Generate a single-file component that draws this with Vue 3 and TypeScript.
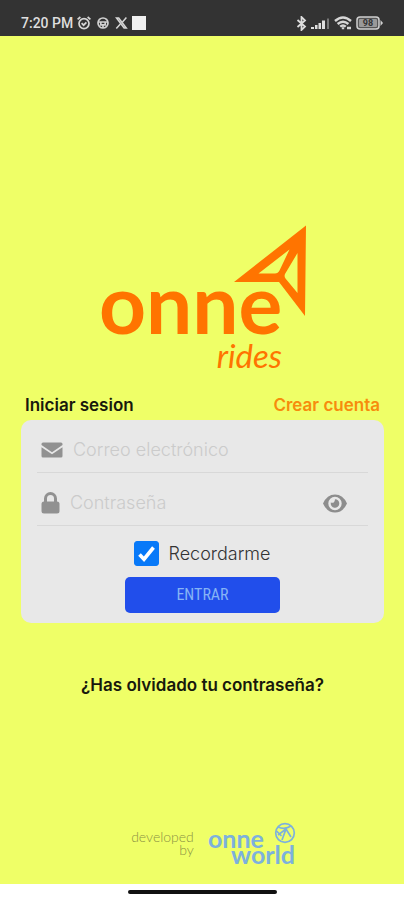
<script setup lang="ts">
import { ref } from 'vue'

const email = ref('')
const password = ref('')
const showPassword = ref(false)
const remember = ref(true)
</script>

<template>
  <div class="screen">
    <header class="status">
      <div class="status-group left">
        <span class="clock">7:20 PM</span>
        <svg width="14" height="14" viewBox="0 0 14 14" fill="none" stroke="#d6d6d6" stroke-width="1.7">
          <circle cx="7" cy="7.6" r="5" />
          <path d="M.6 3.4 3.4 1M13.4 3.4 10.6 1M4.6 7.2 6.6 9.2 9.4 6.4" />
        </svg>
        <svg class="helm" width="12" height="12" viewBox="0 0 12 12" fill="none" stroke="#d0d0d0" stroke-width="1.7">
          <circle cx="6" cy="6" r="5" />
          <path d="M1 5h10M3.800 5v2.800h4.400V5M6 7.800V11" />
        </svg>
        <svg class="ex" width="13" height="12" viewBox="0 0 13 12" fill="none" stroke="#d6d6d6">
          <path d="M1.5 1h2.2l7.6 10H9.1z" stroke-width="1.5" />
          <path d="M11.4.6 7.3 5.2M5.4 7 1.3 11.4" stroke-width="1.5" />
        </svg>
        <span class="square"></span>
      </div>
      <div class="status-group right">
        <svg width="11" height="15" viewBox="0 0 11 15" fill="none" stroke="#dedede" stroke-width="1.8">
          <path d="M1.5 4 9 10.6 5.5 14V1L9 4.4 1.5 11" />
        </svg>
        <svg width="19" height="13" viewBox="0 0 19 13">
          <path d="M0 10h3v2H0zM4 8h2.500v4H4zM7.500 6H10v6H7.500zM11 3.500h3V12h-3z" fill="#dedede" />
          <path d="M16 1.500h2V12h-2z" fill="#777" />
        </svg>
        <svg width="18" height="14" viewBox="0 0 18 14" fill="none" stroke="#d6d6d6" stroke-width="2.4">
          <path d="M1 5q8-7 16 0M3.600 8q5.400-4.600 10.800 0M6.200 10.600q2.800-2.400 5.600 0" />
          <path d="M9 11.200v2M13 12h4" />
        </svg>
        <svg width="27" height="14" viewBox="0 0 27 14">
          <rect x="1" y="1" width="22" height="12" rx="3" fill="#555" stroke="#d0d0d0" stroke-width="1.5" />
          <rect x="3" y="3" width="18" height="8" rx="1" fill="#999" />
          <path d="M24.500 4 27 7l-2.500 3z" fill="#d0d0d0" />
          <text x="12" y="10" text-anchor="middle" class="battery">98</text>
        </svg>
      </div>
    </header>

    <main class="content">
      <svg class="logo" width="208" height="150" viewBox="0 0 208 150" role="img" aria-label="onne rides">
        <path
          fill="#ff7400"
          fill-rule="evenodd"
          d="M207 .5 135 57H180L206 91zM190.500 24.500 159.500 48.500H176Q179 48.500 180.500 45.500zM198.500 28V68L186.500 53.500Q185 51.500 186 49z"
        />
        <text x="0" y="109" class="brand">onne</text>
        <text x="183" y="143" text-anchor="end" class="product">rides</text>
      </svg>

      <nav class="tabs">
        <a href="#login" class="tab current">Iniciar sesion</a>
        <a href="#register" class="tab register">Crear cuenta</a>
      </nav>

      <form class="card" @submit.prevent>
        <div class="field">
          <label for="email" aria-label="Correo electrónico">
            <svg width="22" height="16" viewBox="0 0 22 16">
              <path fill="#919191" d="M2 .5h18q1.500 0 1.500 1.500v1L11 10.200.500 3V2Q.500.500 2 .500zM.500 5.200 11 12.300l10.500-7.100V14q0 1.500-1.500 1.500H2Q.500 15.500.500 14z" />
            </svg>
          </label>
          <input id="email" v-model="email" type="email" placeholder="Correo electrónico" />
        </div>
        <div class="field password">
          <label for="password" aria-label="Contraseña">
            <svg width="19" height="22" viewBox="0 0 19 22">
              <rect x=".5" y="9.500" width="18" height="12" rx="2.500" fill="#919191" />
              <path d="M4.500 11V6.500a5 5 0 0 1 10 0V11" fill="none" stroke="#919191" stroke-width="3" />
            </svg>
          </label>
          <input id="password" v-model="password" :type="showPassword ? 'text' : 'password'" placeholder="Contraseña" />
          <button class="eye" type="button" aria-label="Mostrar contraseña" @click="showPassword = !showPassword">
            <svg width="24" height="19" viewBox="0 0 24 19">
              <path fill="#8d8d8d" fill-rule="evenodd" d="M0 9.500Q4 .500 12 .500t12 9q-4 9-12 9t-12-9zM12 2.800a6.700 6.700 0 1 0 0 13.400 6.700 6.700 0 0 0 0-13.400z" />
              <path fill="#8d8d8d" d="M12 5.200a4.300 4.300 0 1 1-4.200 3.400q3.800 1.200 4.200-3.400z" />
            </svg>
          </button>
        </div>
        <label class="remember">
          <span class="box">
            <input v-model="remember" type="checkbox" />
            <svg v-if="remember" width="25" height="25" viewBox="0 0 25 25">
              <path d="M5.500 13.500 10 18.200 19.500 6.500" fill="none" stroke="#fff" stroke-width="3.600" />
            </svg>
          </span>
          Recordarme
        </label>
        <button class="submit" type="submit">ENTRAR</button>
      </form>

      <a href="#forgot" class="forgot">¿Has olvidado tu contraseña?</a>

      <footer class="credits">
        <span class="by">developed<br />by</span>
        <svg class="studio" width="88" height="48" viewBox="0 0 88 48" role="img" aria-label="onne world">
          <text x="0" y="27" class="world">onne</text>
          <text x="87" y="43" text-anchor="end" class="world">world</text>
          <g fill="none" stroke="#7db1dd" stroke-width="1.7">
            <circle cx="77" cy="12" r="9.300" />
            <path d="M70 6q7 3 13-1M70 14 78 8l5 8M78 8l-4 11M68.500 10l5 5" />
          </g>
        </svg>
      </footer>
    </main>

    <div class="gesture"><span></span></div>
  </div>
</template>

<style>
body {
  margin: 0;
}
</style>

<style scoped>
.screen {
  min-height: 100vh;
  display: flex;
  flex-direction: column;
  background: #efff67;
  font-family: Inter, "Open Sans", sans-serif;
  font-size: 17px;
  color: #17180c;
}

.status {
  height: 36px;
  box-sizing: border-box;
  padding: 10px 21px 0;
  display: flex;
  justify-content: space-between;
  background: #333;
}

.status-group {
  display: flex;
  align-items: center;
  height: 26px;
}

.left {
  gap: 4px;
}

.right {
  gap: 4px;
}

.clock {
  font: 500 14px/26px Roboto, sans-serif;
  color: #dedede;
}

.helm,
.ex {
  margin-left: 2px;
}

.square {
  width: 14px;
  height: 14px;
  background: #f0f0f0;
}

.battery {
  font: 700 9px Roboto, sans-serif;
  fill: #333;
}

.content {
  flex: 1;
  display: flex;
  flex-direction: column;
  align-items: center;
  padding: 189px 20px 15px 21px;
}

.logo {
  display: block;
  overflow: visible;
}

.brand {
  font: 700 82px Lato, sans-serif;
  fill: #ff7400;
}

.product {
  font: italic 400 33px Lato, sans-serif;
  fill: #ff7400;
}

.tabs {
  align-self: stretch;
  display: flex;
  justify-content: space-between;
  padding: 18px 4px 3px;
}

.tab {
  line-height: 24px;
  font-weight: 600;
  text-decoration: none;
  color: inherit;
}

.tab.register {
  color: #f78c0c;
}

.card {
  align-self: stretch;
  box-sizing: border-box;
  padding: 0 16px 10px;
  border-radius: 10px;
  background: #e8e8e8;
  display: flex;
  flex-direction: column;
  align-items: center;
}

.field {
  align-self: stretch;
  height: 53px;
  box-sizing: border-box;
  padding: 8px 4px 0;
  display: flex;
  align-items: center;
  gap: 10px;
  border-bottom: 1px solid #d8d8d8;
}

.field label,
.field svg {
  display: block;
}

.field input {
  flex: 1;
  min-width: 0;
  padding: 0;
  border: 0;
  outline: 0;
  background: transparent;
  font: 300 18px/24px Inter, sans-serif;
  color: #555;
}

.field input::placeholder {
  color: #cbcbcb;
  opacity: 1;
}

.eye {
  margin-right: 17px;
  padding: 0;
  border: 0;
  background: transparent;
}

.remember {
  display: flex;
  align-items: center;
  gap: 9px;
  margin-top: 15px;
  font-size: 18px;
  font-weight: 300;
  line-height: 25px;
  color: #333;
}

.box {
  position: relative;
  width: 25px;
  height: 25px;
}

.box input {
  appearance: none;
  display: block;
  width: 25px;
  height: 25px;
  margin: 0;
  border-radius: 3px;
  border: 1px solid #0879f8;
  background: #fff;
}

.box input:checked {
  background: #0879f8;
}

.box svg {
  position: absolute;
  inset: 0;
  pointer-events: none;
}

.submit {
  width: 155px;
  height: 36px;
  margin-top: 11px;
  padding: 0;
  border: 0;
  border-radius: 5px;
  background: #214eeb;
  color: #86b4f5;
  font: 400 16px/36px "Roboto Condensed", "Open Sans Condensed", Roboto, sans-serif;
}

.forgot {
  margin-top: 50px;
  line-height: 24px;
  font-weight: 600;
  text-decoration: none;
  color: inherit;
}

.credits {
  margin-top: auto;
  display: flex;
  align-items: center;
  gap: 14px;
  padding-left: 22px;
}

.by {
  padding-bottom: 4px;
  font: 300 14px/13px Lato, sans-serif;
  text-align: right;
  color: #8c9344;
}

.studio {
  display: block;
  overflow: visible;
}

.world {
  font: 700 25px Lato, sans-serif;
  fill: #7db1dd;
}

.gesture {
  height: 16px;
  display: flex;
  align-items: center;
  justify-content: center;
  background: #fff;
}

.gesture span {
  width: 149px;
  height: 4px;
  border-radius: 2px;
  background: #111;
}
</style>
